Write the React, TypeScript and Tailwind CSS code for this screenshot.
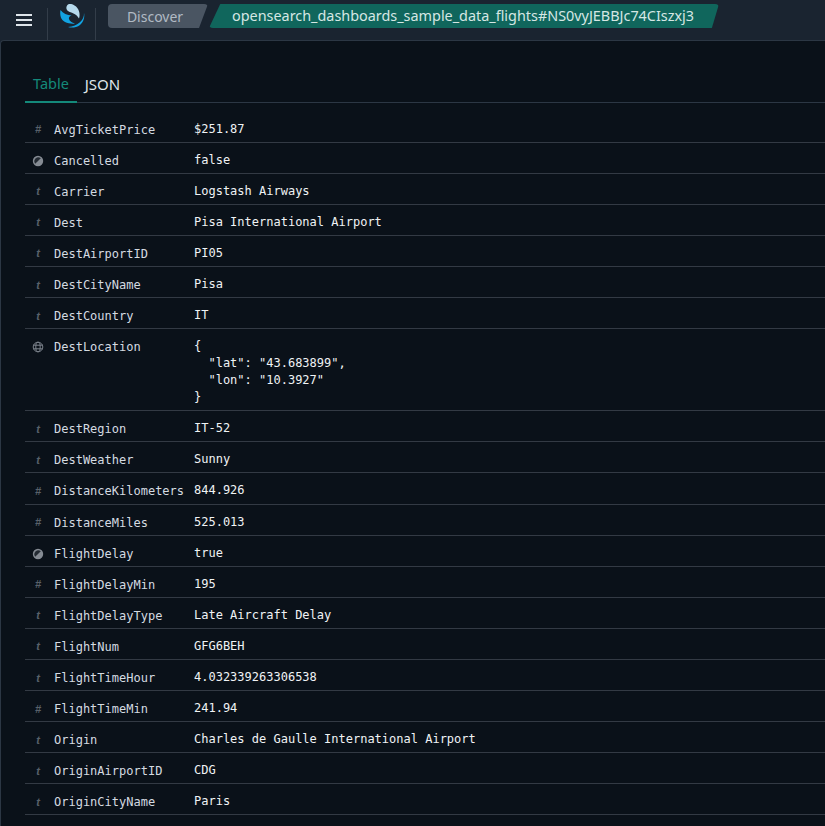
const rows: [string, string, string][] = [
  ["num", "AvgTicketPrice", "$251.87"],
  ["bool", "Cancelled", "false"],
  ["t", "Carrier", "Logstash Airways"],
  ["t", "Dest", "Pisa International Airport"],
  ["t", "DestAirportID", "PI05"],
  ["t", "DestCityName", "Pisa"],
  ["t", "DestCountry", "IT"],
  ["geo", "DestLocation", '{\n  "lat": "43.683899",\n  "lon": "10.3927"\n}'],
  ["t", "DestRegion", "IT-52"],
  ["t", "DestWeather", "Sunny"],
  ["num", "DistanceKilometers", "844.926"],
  ["num", "DistanceMiles", "525.013"],
  ["bool", "FlightDelay", "true"],
  ["num", "FlightDelayMin", "195"],
  ["t", "FlightDelayType", "Late Aircraft Delay"],
  ["t", "FlightNum", "GFG6BEH"],
  ["t", "FlightTimeHour", "4.032339263306538"],
  ["num", "FlightTimeMin", "241.94"],
  ["t", "Origin", "Charles de Gaulle International Airport"],
  ["t", "OriginAirportID", "CDG"],
  ["t", "OriginCityName", "Paris"],
];

function TypeIcon({ kind }: { kind: string }) {
  if (kind === "bool")
    return (
      <svg width="12" height="12" viewBox="0 0 12 12">
        <circle cx="6" cy="6" r="5.2" fill="#858b93" />
        <path d="M3.2 8.8 A4 4 0 0 1 8.8 3.2 Z" fill="#232a32" />
      </svg>
    );
  if (kind === "geo")
    return (
      <svg width="12" height="12" viewBox="0 0 12 12" fill="none" stroke="#7b828b" strokeWidth="1">
        <circle cx="6" cy="6" r="4.8" />
        <ellipse cx="6" cy="6" rx="2.2" ry="4.8" />
        <path d="M1.2 4.2h9.6M1.2 7.8h9.6" />
      </svg>
    );
  return (
    <span className="text-[11px] italic font-bold leading-none text-[#59616a] [font-family:'Liberation_Sans',sans-serif]">
      {kind === "num" ? "#" : "t"}
    </span>
  );
}

export default function App() {
  return (
    <div className="w-[825px] h-[826px] overflow-hidden bg-[#1a2430] flex flex-col [font-family:'Noto_Sans',sans-serif]">
      <header className="h-[40px] shrink-0 flex items-stretch bg-[#1a2430]">
        <div className="w-[48px] flex items-center justify-center border-r border-[#333d49] my-[8px] mb-0">
          <div className="flex flex-col gap-[3px] -mt-[9px]">
            <span className="block w-[16px] h-[2px] bg-[#dfe5ea]" />
            <span className="block w-[16px] h-[2px] bg-[#dfe5ea]" />
            <span className="block w-[16px] h-[2px] bg-[#dfe5ea]" />
          </div>
        </div>
        <div className="w-[48px] flex items-start justify-center border-r border-[#333d49] mt-[8px]">
          <svg width="26" height="26" viewBox="0 0 26 26" className="-mt-[5px]">
            <path d="M10 1 C7 2 6.5 6 9 8 C12 10 17 10 20 15.5 C21.5 11 20 5 15.5 2.5 C13.5 1 11.5 0.7 10 1 Z" fill="#b5d9ec" />
            <path d="M1.5 7 C0.5 12 2 17 6 19 C9 20.5 13 21 16 20.5 C13 20 10.5 18 10 16 C9.5 14 11.5 12.5 13 12.5 C8 12 4 10.5 1.5 7 Z" fill="#12a3e2" />
            <path d="M25 10 C25.5 17 19 23 9 24 C12 25 17 25 21 22 C24.5 19 26 14 25 10 Z" fill="#12a3e2" />
          </svg>
        </div>
        <div className="flex items-start pt-[4px] pl-[12px] gap-[1px]">
          <div className="h-[24px] w-[100px] flex items-center justify-center rounded-[4px] bg-[#4a5562] text-[14px] text-[#b1bac4] [clip-path:polygon(0_0,100%_0,91%_100%,0_100%)] pr-[6px]">
            Discover
          </div>
          <div className="h-[24px] w-[510px] flex items-center rounded-[4px] bg-[#10665c] text-[14.4px] text-[#d6e7e4] pl-[23px] [clip-path:polygon(2.2%_0,100%_0,98.6%_100%,0_100%)] whitespace-nowrap">
            opensearch_dashboards_sample_data_flights#NS0vyJEBBJc74CIszxj3
          </div>
        </div>
      </header>
      <main className="flex-1 min-h-0 border-t border-l border-[#2c3744] rounded-tl-[4px] bg-[#0a1119] pl-[24px] pt-[24px]">
        <div className="flex h-[38px] border-b border-[#2c3744] text-[14px]">
          <div className="w-[52px] h-[38px] flex items-center justify-center border-b-2 border-[#14897a] text-[14.5px] text-[#14897a] pt-[1px]">Table</div>
          <div className="w-[50px] h-[37px] flex items-center justify-center text-[#dfe5ea] text-[15px] pt-[1px] pl-[1px]">JSON</div>
        </div>
        <div className="mt-[8.6px] [font-family:'DejaVu_Sans_Mono',monospace] text-[12px] text-[#dfe5ea]">
          {rows.map(([kind, name, value]) => (
            <div key={name} className="flex border-b border-[#333a44] min-h-[31.1px] pt-[9px] pb-[4px] leading-[17px]">
              <div className="w-[29px] pl-[3px] h-[16px] flex items-center justify-center shrink-0 mt-[1px] pr-[6px]">
                <TypeIcon kind={kind} />
              </div>
              <div className="w-[140px] h-[16px] shrink-0 whitespace-nowrap mt-[1px] text-[#d5dbe1]">{name}</div>
              <pre className="[font-family:inherit] whitespace-pre text-[#f0f3f5] leading-[17px]">{value}</pre>
            </div>
          ))}
        </div>
      </main>
    </div>
  );
}
